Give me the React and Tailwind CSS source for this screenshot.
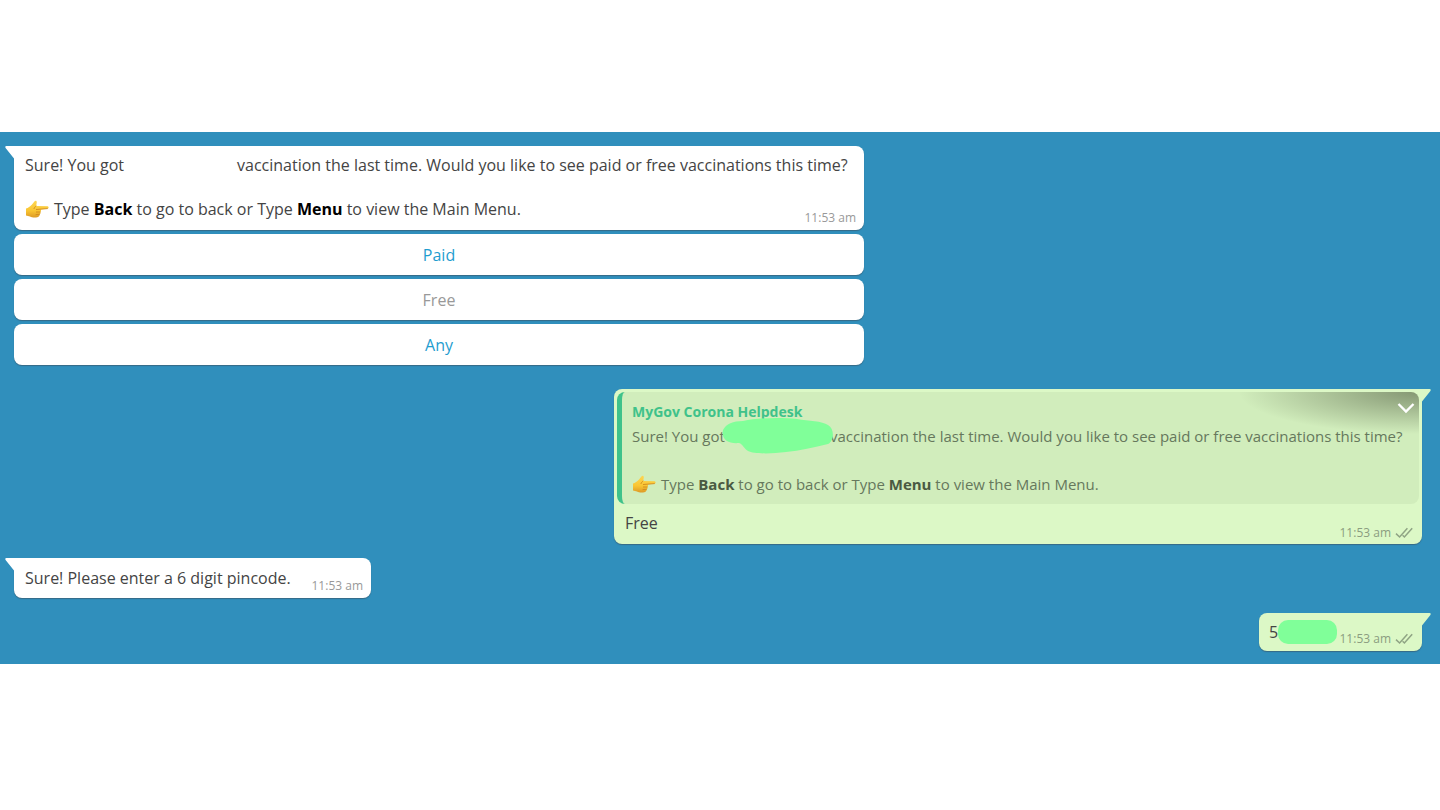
import clsx from "clsx";

function PointingHand() {
  return (
    <svg viewBox="0 0 24 20" role="img" aria-label="Pointing right" className="inline-block h-5 w-6 shrink-0">
      <defs>
        <linearGradient id="skin" x1="0" y1="0" x2="0" y2="1">
          <stop offset="0" stopColor="#fdd653" />
          <stop offset="0.6" stopColor="#f9c532" />
          <stop offset="1" stopColor="#dd9a26" />
        </linearGradient>
      </defs>
      <path
        d="M1 9.6 C3.2 9 5 7.6 6.8 5.8 L9.6 2.2 C10.4 1.1 12 1.7 11.8 3.2 L11.2 7 L22.6 7.2 C24 7.4 24 9.3 22.6 9.6 L15.6 10.4 C16.4 11.2 16.1 12.5 15.2 12.9 C15.9 13.8 15.5 15 14.5 15.3 C15 16.6 14 17.8 12.4 18.2 C9.6 18.7 7 18.6 5 17.4 L1 16.6 Z"
        fill="url(#skin)"
      />
      <path
        d="M11 7 C10 8 9.2 8.6 9 9.6 M11.4 10.5 L22.4 9.6 M11.4 13 H15.2 M11 15.6 L14.5 15.3"
        fill="none"
        stroke="#d08a1e"
        strokeWidth="0.9"
        strokeLinecap="round"
      />
    </svg>
  );
}

function DoubleTick() {
  return (
    <svg viewBox="0 0 18 12" aria-label="Delivered" role="img" className="h-3 w-[18px]">
      <path d="M1 6.6 L4.6 10 L12.4 1.2 M7.6 8.2 L9.4 10 L17.2 1.2" fill="none" stroke="#8fa484" strokeWidth="1.5" />
    </svg>
  );
}

function Tail({ out }) {
  return (
    <svg
      viewBox="0 0 9 13"
      aria-hidden="true"
      className={clsx("absolute top-0 h-[13px] w-[9px]", out ? "left-full -scale-x-100 text-[#dcf8c6]" : "right-full text-white")}
    >
      <path d="M9 0 H1.4 C0 0 0 1.2 .8 2.2 L9 12.6 Z" fill="currentColor" />
    </svg>
  );
}

function Bubble({ out, className, children }) {
  return (
    <div
      className={clsx(
        "relative rounded-lg shadow-[0_1px_1px_rgba(60,70,80,0.5)]",
        out ? "self-end rounded-tr-none bg-[#dcf8c6]" : "rounded-tl-none bg-white",
        className
      )}
    >
      <Tail out={out} />
      {children}
    </div>
  );
}

function Time({ out }) {
  return (
    <span
      className={clsx(
        "flex shrink-0 items-center gap-1 text-xs leading-4 whitespace-nowrap",
        out ? "text-[#8b9d80]" : "text-[#999999]"
      )}
    >
      11:53 am
      {out && <DoubleTick />}
    </span>
  );
}

function MenuHint({ strong }) {
  return (
    <p className="flex items-center gap-[5px] whitespace-nowrap">
      <PointingHand />
      <span>
        Type <b className={strong}>Back</b> to go to back or Type <b className={strong}>Menu</b> to view the Main Menu.
      </span>
    </p>
  );
}

const options = [
  { label: "Paid" },
  { label: "Free", used: true },
  { label: "Any" },
];

export default function App() {
  return (
    <div className="min-h-screen bg-white pt-[132px] font-['Open_Sans','Noto_Sans',sans-serif]">
      <main className="flex flex-col bg-[#308fbc] pt-[14px] pr-[18px] pb-[13px] pl-[14px] text-base text-[#444444]">
        <section className="flex w-full max-w-[850px] flex-col gap-1">
          <Bubble className="pt-2 pr-2 pb-1 pl-[11px] leading-[22px]">
            <p className="flex whitespace-nowrap">
              <span className="w-[212px]">Sure! You got</span>
              <span>vaccination the last time. Would you like to see paid or free vaccinations this time?</span>
            </p>
            <div className="mt-[22px] flex items-start justify-between">
              <MenuHint strong="text-black" />
              <div className="flex h-7 items-end">
                <Time />
              </div>
            </div>
          </Bubble>
          {options.map((option) => (
            <button
              key={option.label}
              type="button"
              disabled={option.used}
              className={clsx(
                "h-[41px] rounded-lg bg-white shadow-[0_1px_1px_rgba(60,70,80,0.5)]",
                option.used ? "text-[#999999]" : "text-[#1f9dcf]"
              )}
            >
              {option.label}
            </button>
          ))}
        </section>

        <Bubble out className="mt-6 w-full max-w-[808px] p-[3px]">
          <div className="relative overflow-hidden rounded-lg border-l-[5px] border-[#3fc28a] bg-[#d1edbc] px-[10px] py-2 text-[15px] leading-6 text-[#66785c]">
            <div className="absolute top-0 right-0 h-[42px] w-[180px] bg-[radial-gradient(180px_42px_at_100%_0%,rgba(70,80,55,0.55)_0%,rgba(70,80,55,0.3)_45%,transparent_100%)]" />
            <button type="button" aria-label="Message options" className="absolute top-2 right-1 h-4 w-[18px]">
              <svg viewBox="0 0 18 16" className="h-4 w-[18px]">
                <path d="M1.5 4 L9 11.5 L16.5 4" fill="none" stroke="#ffffff" strokeWidth="2.4" />
              </svg>
            </button>
            <p className="text-sm leading-6 font-bold text-[#3fc28a]">MyGov Corona Helpdesk</p>
            <p className="flex whitespace-nowrap">
              <span className="w-[198px]">Sure! You got</span>
              <span>vaccination the last time. Would you like to see paid or free vaccinations this time?</span>
            </p>
            <div className="mt-6">
              <MenuHint strong="text-[#4a5a42]" />
            </div>
            <svg viewBox="0 0 113 37" aria-hidden="true" className="absolute top-[25px] left-[99px] h-[37px] w-[113px]">
              <path
                d="M2 13 C5 7 12 4 22 4 C36 1 58 0 76 2 C88 4 101 4 107 8 C114 12 113 24 107 27 C93 30 79 34 65 35 C50 37 33 37 27 34 C23 32 22 27 18 26 C8 27 0 23 2 13 Z"
                fill="#80ff99"
              />
            </svg>
          </div>
          <div className="flex h-[37px] items-center justify-between pr-[6px] pl-2">
            <p>Free</p>
            <div className="self-end">
              <Time out />
            </div>
          </div>
        </Bubble>

        <Bubble className="mt-[14px] flex h-10 w-[357px] items-center justify-between pr-2 pl-[11px]">
          <p className="whitespace-nowrap">Sure! Please enter a 6 digit pincode.</p>
          <div className="self-end pb-1">
            <Time />
          </div>
        </Bubble>

        <Bubble out className="mt-[15px] flex h-[38px] w-[163px] items-center justify-between pr-[9px] pl-[10px]">
          <div className="flex items-center">
            <span>5</span>
            <span className="h-6 w-[59px] rounded-[10px] bg-[#80ff99]" />
          </div>
          <div className="self-end pb-1">
            <Time out />
          </div>
        </Bubble>
      </main>
    </div>
  );
}
